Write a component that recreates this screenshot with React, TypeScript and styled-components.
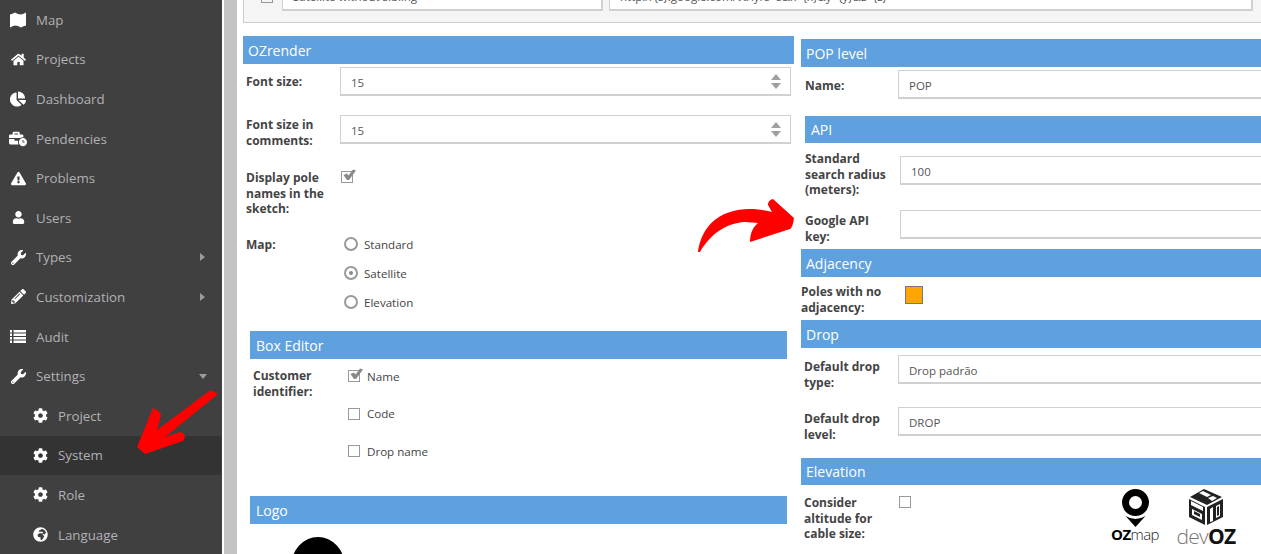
import React from 'react'
import styled, { createGlobalStyle } from 'styled-components'
import {
  FaHome,
  FaChartPie,
  FaBusinessTime,
  FaExclamationTriangle,
  FaUser,
  FaWrench,
  FaPencilAlt,
  FaCog,
  FaGlobeAfrica,
} from 'react-icons/fa'

const GlobalStyle = createGlobalStyle`
  html, body {
    margin: 0;
    height: 100%;
    overflow: hidden;
    background: #fff;
  }

  body {
    font-family: "Open Sans", "Liberation Sans", sans-serif;
    font-size: 12px;
    color: #555;
  }

  * {
    box-sizing: border-box;
  }
`

const Shell = styled.div`
  position: relative;
  display: flex;
  width: 1261px;
  height: 554px;
  overflow: hidden;
`

const Sidebar = styled.nav`
  flex: 0 0 222px;
  background: #404040;
`

const MenuItem = styled.div<{ $sub?: boolean; $active?: boolean }>`
  display: flex;
  align-items: center;
  height: 39.6px;
  padding-left: ${(p) => (p.$sub ? '32px' : '10px')};
  margin-right: ${(p) => (p.$active ? '1px' : '0')};
  background: ${(p) => (p.$active ? '#333' : 'transparent')};
  color: #b1b1b6;
  font-size: 13.3px;
`

const MenuIcon = styled.span<{ $size?: number }>`
  display: flex;
  align-items: center;
  justify-content: center;
  flex: 0 0 16px;
  width: 16px;
  min-width: 0;
  margin-right: 10px;
  color: #fff;
  font-size: ${(p) => p.$size ?? 15}px;

  svg {
    flex-shrink: 0;
  }
`

const MenuLabel = styled.span`
  flex: 1;
`

const CaretRight = styled.span`
  margin-right: 17px;
  border-left: 5px solid #9b9ba6;
  border-top: 4px solid transparent;
  border-bottom: 4px solid transparent;
`

const CaretDown = styled.span`
  margin-right: 15px;
  border-top: 5px solid #9b9ba6;
  border-left: 4px solid transparent;
  border-right: 4px solid transparent;
`

const Gutter = styled.div`
  flex: 0 0 13px;
  margin-left: 2px;
  background: #c3c3c3;
`

const Main = styled.main`
  flex: 1;
  min-width: 0;
  padding-left: 6px;
`

const Well = styled.div`
  display: flex;
  align-items: flex-end;
  gap: 6px;
  width: 1100px;
  height: 23px;
  padding: 0 0 11px 17px;
  overflow: hidden;
  background: #f5f5f5;
  border: 1px solid #ccc;
  border-top: 0;
`

const WellCheck = styled.span`
  flex: 0 0 12px;
  align-self: flex-start;
  height: 12px;
  margin: -9px 3px 0 0;
  border: 1px solid #999;
  background: #f5f5f5;
`

const WellInput = styled.input<{ $width: number }>`
  flex: 0 0 ${(p) => p.$width}px;
  height: 29px;
  padding: 0 10px;
  border: 2px solid #d0d0d0;
  border-width: 1px 2px 2px 1px;
  background: #fff;
  color: #555;
  font: inherit;
  font-size: 11.5px;
  outline: none;
`

const Columns = styled.div`
  display: grid;
  grid-template-columns: 551px 640px;
  column-gap: 7px;
  align-items: start;
  margin-top: 13px;
`

const Column = styled.section<{ $top?: number }>`
  display: flex;
  flex-direction: column;
  padding-top: ${(p) => p.$top ?? 0}px;
`

const SectionHeader = styled.h3<{ $inset?: number; $height?: number; $top?: number; $right?: number }>`
  height: ${(p) => p.$height ?? 28}px;
  margin: ${(p) => p.$top ?? 0}px ${(p) => p.$right ?? 0}px 0 ${(p) => p.$inset ?? 0}px;
  padding-left: ${(p) => ((p.$inset ?? 0) > 0 ? 6 : 5)}px;
  background: #5fa1de;
  color: #fff;
  font-size: 14px;
  font-weight: 400;
  line-height: ${(p) => (p.$height ?? 28) + 1}px;
`

const Row = styled.div<{ $top: number; $height?: number; $inset?: number }>`
  display: flex;
  align-items: flex-start;
  height: ${(p) => (p.$height ? `${p.$height}px` : 'auto')};
  margin-top: ${(p) => p.$top}px;
  margin-left: ${(p) => p.$inset ?? 0}px;
`

const Label = styled.label<{ $width: number; $pad?: number; $down?: number }>`
  flex: 0 0 ${(p) => p.$width}px;
  margin-top: ${(p) => p.$down ?? 0}px;
  padding-left: ${(p) => p.$pad ?? 0}px;
  color: #444;
  font-size: 12px;
  font-weight: 700;
  line-height: 15.6px;
`

const Field = styled.div<{ $width?: number }>`
  position: relative;
  flex: ${(p) => (p.$width ? `0 0 ${p.$width}px` : '1')};
`

const TextInput = styled.input`
  display: block;
  width: 100%;
  height: 29px;
  padding: 2px 10px 0;
  border: 1px solid #d0d0d0;
  border-width: 1px 1px 2px 1px;
  background: #fff;
  color: #555;
  font: inherit;
  font-size: 11.5px;
  outline: none;
`

const Spinner = styled.span`
  position: absolute;
  top: 7px;
  right: 10px;
  display: flex;
  flex-direction: column;
  gap: 3px;
`

const SpinUp = styled.i`
  border-bottom: 6px solid #a0a0a0;
  border-left: 5px solid transparent;
  border-right: 5px solid transparent;
`

const SpinDown = styled.i`
  border-top: 6px solid #a0a0a0;
  border-left: 5px solid transparent;
  border-right: 5px solid transparent;
`

const OptionList = styled.div<{ $gap: number }>`
  display: flex;
  flex-direction: column;
  gap: ${(p) => p.$gap}px;
`

const Option = styled.div<{ $gap: number }>`
  display: flex;
  align-items: center;
  gap: ${(p) => p.$gap}px;
  height: 16px;
  color: #444;
  font-size: 11.6px;
`

const Radio = styled.span<{ $checked?: boolean }>`
  position: relative;
  flex: 0 0 14px;
  height: 14px;
  border: 2px solid #999;
  border-radius: 50%;

  &::after {
    content: '';
    display: ${(p) => (p.$checked ? 'block' : 'none')};
    position: absolute;
    top: 3px;
    left: 3px;
    width: 4px;
    height: 4px;
    border-radius: 50%;
    background: #888;
  }
`

const Box = styled.span<{ $down?: number }>`
  position: relative;
  display: block;
  flex: 0 0 12px;
  width: 12px;
  height: 12px;
  margin-top: ${(p) => p.$down ?? 0}px;
  border: 1px solid #999;
  background: #fff;
`

const Tick = styled.svg`
  position: absolute;
  top: -3px;
  left: 0;
  width: 14px;
  height: 13px;
`

const Swatch = styled.span`
  display: block;
  width: 18px;
  height: 18px;
  margin-top: 3px;
  background: #ffa500;
  border: 1px solid #777;
`

const LogoCircle = styled.div`
  width: 54px;
  height: 60px;
  margin: 13px 0 0 41px;
  border-radius: 50%;
  background: #000;
`

const Annotation = styled.svg<{ $x: number; $y: number }>`
  position: absolute;
  left: ${(p) => p.$x}px;
  top: ${(p) => p.$y}px;
`

const Brand = styled.div<{ $x: number; $width: number }>`
  position: absolute;
  left: ${(p) => p.$x}px;
  top: 489px;
  width: ${(p) => p.$width}px;
  display: flex;
  flex-direction: column;
  align-items: center;
`

const OzMapText = styled.div`
  margin-top: -2px;
  color: #222;
  font-size: 15px;
  font-weight: 300;
  line-height: 19px;
  letter-spacing: -0.6px;
  white-space: nowrap;

  b {
    color: #000;
    font-weight: 700;
  }
`

const DevOzText = styled.div`
  color: #777;
  font-size: 21px;
  font-weight: 300;
  line-height: 22px;
  letter-spacing: -0.7px;
  white-space: nowrap;

  b {
    color: #111;
    font-weight: 700;
  }
`

const MapGlyph = () => (
  <svg width="16" height="16" viewBox="0 0 16 16" fill="#fff">
    <path d="M0 2.5 Q2.5 2 5 0.5 Q8 2.5 11 2.5 Q13.5 2 16 0.5 V13.5 Q13.5 14 11 15.5 Q8 13.5 5 13.5 Q2.5 14 0 15.5 Z" />
  </svg>
)

const ListGlyph = () => (
  <svg width="16" height="13" viewBox="0 0 16 13" fill="#fff">
    <path d="M0 0H2V2.5H0Z M3.5 0H16V2.5H3.5Z M0 3.5H2V6H0Z M3.5 3.5H16V6H3.5Z M0 7H2V9.5H0Z M3.5 7H16V9.5H3.5Z M0 10.5H2V13H0Z M3.5 10.5H16V13H3.5Z" />
  </svg>
)

const Menu = () => (
  <Sidebar>
    <MenuItem><MenuIcon><MapGlyph /></MenuIcon><MenuLabel>Map</MenuLabel></MenuItem>
    <MenuItem><MenuIcon><FaHome /></MenuIcon><MenuLabel>Projects</MenuLabel></MenuItem>
    <MenuItem><MenuIcon $size={16}><FaChartPie /></MenuIcon><MenuLabel>Dashboard</MenuLabel></MenuItem>
    <MenuItem><MenuIcon $size={18}><FaBusinessTime /></MenuIcon><MenuLabel>Pendencies</MenuLabel></MenuItem>
    <MenuItem><MenuIcon><FaExclamationTriangle /></MenuIcon><MenuLabel>Problems</MenuLabel></MenuItem>
    <MenuItem><MenuIcon $size={13}><FaUser /></MenuIcon><MenuLabel>Users</MenuLabel></MenuItem>
    <MenuItem><MenuIcon><FaWrench /></MenuIcon><MenuLabel>Types</MenuLabel><CaretRight /></MenuItem>
    <MenuItem><MenuIcon><FaPencilAlt /></MenuIcon><MenuLabel>Customization</MenuLabel><CaretRight /></MenuItem>
    <MenuItem><MenuIcon><ListGlyph /></MenuIcon><MenuLabel>Audit</MenuLabel></MenuItem>
    <MenuItem><MenuIcon><FaWrench /></MenuIcon><MenuLabel>Settings</MenuLabel><CaretDown /></MenuItem>
    <MenuItem $sub><MenuIcon><FaCog /></MenuIcon><MenuLabel>Project</MenuLabel></MenuItem>
    <MenuItem $sub $active><MenuIcon><FaCog /></MenuIcon><MenuLabel>System</MenuLabel></MenuItem>
    <MenuItem $sub><MenuIcon><FaCog /></MenuIcon><MenuLabel>Role</MenuLabel></MenuItem>
    <MenuItem $sub><MenuIcon><FaGlobeAfrica /></MenuIcon><MenuLabel>Language</MenuLabel></MenuItem>
  </Sidebar>
)

const Checked = ({ down }: { down?: number }) => (
  <Box $down={down}>
    <Tick viewBox="0 0 14 13">
      <path d="M1.5 6 L5 4.5 L6.5 6.5 L11 0.5 L14 1.5 L7 11 L5 11 Z" fill="#888" />
    </Tick>
  </Box>
)

const LeftColumn = () => (
  <Column>
    <SectionHeader>OZrender</SectionHeader>
    <Row $top={3} $height={29}>
      <Label $width={97} $pad={3} $down={7}>Font size:</Label>
      <Field $width={451}>
        <TextInput readOnly value="15" />
        <Spinner><SpinUp /><SpinDown /></Spinner>
      </Field>
    </Row>
    <Row $top={19} $height={29}>
      <Label $width={97} $pad={3} $down={2}>Font size in comments:</Label>
      <Field $width={451}>
        <TextInput readOnly value="15" />
        <Spinner><SpinUp /><SpinDown /></Spinner>
      </Field>
    </Row>
    <Row $top={26} $height={47}>
      <Label $width={98} $pad={3}>Display pole names in the sketch:</Label>
      <Checked down={1} />
    </Row>
    <Row $top={19}>
      <Label $width={101} $pad={3} $down={1}>Map:</Label>
      <OptionList $gap={13}>
        <Option $gap={6}><Radio />Standard</Option>
        <Option $gap={6}><Radio $checked />Satellite</Option>
        <Option $gap={6}><Radio />Elevation</Option>
      </OptionList>
    </Row>
    <SectionHeader $inset={7} $right={7} $top={21}>Box Editor</SectionHeader>
    <Row $top={9} $inset={7}>
      <Label $width={98} $pad={3}>Customer identifier:</Label>
      <OptionList $gap={21.5}>
        <Option $gap={7}><Checked />Name</Option>
        <Option $gap={7}><Box />Code</Option>
        <Option $gap={7}><Box />Drop name</Option>
      </OptionList>
    </Row>
    <SectionHeader $inset={7} $right={7} $top={37}>Logo</SectionHeader>
    <Row $top={0} $inset={7}>
      <LogoCircle />
    </Row>
  </Column>
)

const RightColumn = () => (
  <Column $top={3}>
    <SectionHeader>POP level</SectionHeader>
    <Row $top={3} $height={29}>
      <Label $width={97} $pad={4} $down={8}>Name:</Label>
      <Field><TextInput readOnly value="POP" /></Field>
    </Row>
    <SectionHeader $inset={4} $height={27} $top={17}>API</SectionHeader>
    <Row $top={13} $inset={4} $height={29}>
      <Label $width={95} $down={-5}>Standard search radius (meters):</Label>
      <Field><TextInput readOnly value="100" /></Field>
    </Row>
    <Row $top={25} $inset={4} $height={29}>
      <Label $width={95} $down={3}>Google API<br />key:</Label>
      <Field><TextInput readOnly value="" /></Field>
    </Row>
    <SectionHeader $top={10}>Adjacency</SectionHeader>
    <Row $top={6} $height={37}>
      <Label $width={104} $down={1}>Poles with no adjacency:</Label>
      <Swatch />
    </Row>
    <SectionHeader>Drop</SectionHeader>
    <Row $top={7} $height={29}>
      <Label $width={97} $pad={3} $down={4}>Default drop type:</Label>
      <Field><TextInput readOnly value="Drop padrão" /></Field>
    </Row>
    <Row $top={23} $height={29}>
      <Label $width={97} $pad={3} $down={4}>Default drop level:</Label>
      <Field><TextInput readOnly value="DROP" /></Field>
    </Row>
    <SectionHeader $height={27} $top={22}>Elevation</SectionHeader>
    <Row $top={10}>
      <Label $width={98} $pad={3}>Consider altitude for cable size:</Label>
      <Box $down={1} />
    </Row>
  </Column>
)

const OzMapLogo = () => (
  <Brand $x={1105} $width={60}>
    <svg width="27" height="38" viewBox="0 0 27 38">
      <path
        fillRule="evenodd"
        d="M13.5 0 A13.5 13.5 0 0 1 27 13.5 A13.5 13.5 0 0 1 0 13.5 A13.5 13.5 0 0 1 13.5 0 Z M13.5 7 A6.5 6.5 0 1 0 13.5 20 A6.5 6.5 0 1 0 13.5 7 Z"
        fill="#000"
      />
      <path d="M3.5 27 Q13.5 33 23.5 27 L13.5 38 Z" fill="#000" />
    </svg>
    <OzMapText><b>OZ</b>map</OzMapText>
  </Brand>
)

const DevOzLogo = () => (
  <Brand $x={1166} $width={80}>
    <svg width="34" height="36" viewBox="0 0 34 36">
      <path d="M15 0 L33 8 L18 16 L1 8 Z" fill="#222" />
      <path d="M10 4 L14 2 L22 6 L18 8 Z M19 9 L24 7 L28 9 L23 12 Z" fill="#fff" />
      <path d="M0 10 L16 18 L16 36 L0 28 Z" fill="#222" />
      <path d="M3 20 L13 25 L13 31 L3 26 Z" fill="#fff" />
      <path d="M5 22 L11 25 L11 28 L5 25 Z" fill="#222" />
      <path d="M2 12 L14 18 L14 22 L2 16 Z" fill="#fff" />
      <path d="M18 18 L34 10 L34 28 L18 36 Z" fill="#222" />
      <path d="M21 20 L24 18 L24 32 L21 33 Z M27 17 L31 15 L31 27 L27 29 Z" fill="#fff" />
      <path d="M28 18 L30 17 L30 26 L28 27 Z" fill="#222" />
    </svg>
    <DevOzText>dev<b>OZ</b></DevOzText>
  </Brand>
)

export default function App() {
  return (
    <Shell>
      <GlobalStyle />
      <Menu />
      <Gutter />
      <Main>
        <Well>
          <WellCheck />
          <WellInput $width={321} readOnly value="Satellite without sibling" />
          <WellInput $width={644} readOnly value="http://{s}.google.com/vt/lyrs=s&x={x}&y={y}&z={z}" />
        </Well>
        <Columns>
          <LeftColumn />
          <RightColumn />
        </Columns>
      </Main>
      <OzMapLogo />
      <DevOzLogo />
      <Annotation $x={690} $y={190} width="110" height="70" viewBox="0 0 110 70">
        <path
          d="M104 28 L83 9 Q78 10 78 15 L82 22 C65 18 52 18 40 22 C20 28 10 45 8 62 L10 62 C20 45 35 33 55 32 C60 32 65 33 68 33 C62 38 60 45 60 52 L100 39 Q103 37 104 28 Z"
          fill="#f00"
        />
      </Annotation>
      <Annotation $x={130} $y={385} width="95" height="75" viewBox="0 0 95 75">
        <path
          d="M80 5.5 Q85 6 88 9 L35 52 L50 47 Q55 48 55 52 L53 56 L15 69 L7 62 L23 23 Q29 25 31 30 L27 45 Z"
          fill="#f00"
        />
      </Annotation>
    </Shell>
  )
}
